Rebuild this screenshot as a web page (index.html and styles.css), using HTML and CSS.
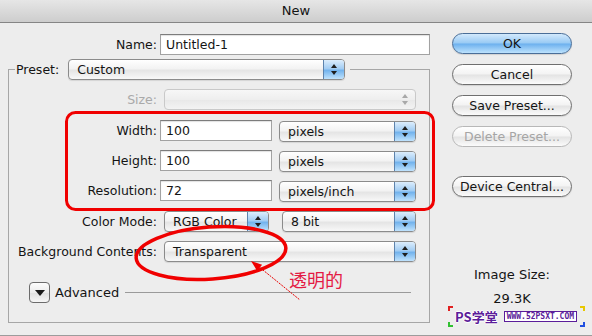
FILE: index.html
```html
<!DOCTYPE html>
<html lang="en">
<head>
  <meta charset="UTF-8" />
  <meta name="viewport" content="width=device-width, initial-scale=1.0" />
  <link rel="stylesheet" href="styles.css">
</head>
<body>
  <div class="window">
    <div class="titlebar">New</div>

    <div class="content">
      <div class="form">
        <div class="row name-row">
          <div class="lbl">Name:</div>
          <div class="field name-field">Untitled-1</div>
        </div>

        <fieldset class="preset">
          <legend>
            <span class="legend-lbl">Preset:</span>
            <div class="popup preset-popup"><span>Custom</span><i class="arrows"></i></div>
          </legend>

          <div class="row size-row">
            <div class="lbl dim">Size:</div>
            <div class="popup disabled full"><span></span><i class="arrows"></i></div>
          </div>

          <div class="row r-width">
            <div class="lbl">Width:</div>
            <div class="field num-field">100</div>
            <div class="popup unit"><span>pixels</span><i class="arrows"></i></div>
          </div>

          <div class="row r-height">
            <div class="lbl">Height:</div>
            <div class="field num-field">100</div>
            <div class="popup unit"><span>pixels</span><i class="arrows"></i></div>
          </div>

          <div class="row r-res">
            <div class="lbl">Resolution:</div>
            <div class="field num-field">72</div>
            <div class="popup unit"><span>pixels/inch</span><i class="arrows"></i></div>
          </div>

          <div class="row r-mode">
            <div class="lbl">Color Mode:</div>
            <div class="popup mode"><span>RGB Color</span><i class="arrows"></i></div>
            <div class="popup bits"><span>8 bit</span><i class="arrows"></i></div>
          </div>

          <div class="row r-bg">
            <div class="lbl">Background Contents:</div>
            <div class="popup full"><span>Transparent</span><i class="arrows"></i></div>
          </div>

          <div class="row advanced">
            <div class="disclosure"></div>
            <span class="adv-text">Advanced</span>
            <div class="adv-line"></div>
          </div>
        </fieldset>
      </div>

      <div class="side">
        <div class="btn default">OK</div>
        <div class="btn">Cancel</div>
        <div class="btn">Save Preset...</div>
        <div class="btn disabled">Delete Preset...</div>
        <div class="btn device">Device Central...</div>

        <div class="img-size">
          <div>Image Size:</div>
          <div class="img-val">29.3K</div>
        </div>

        <div class="watermark">
          <i class="corner tl"></i><i class="corner tr"></i>
          <i class="corner bl"></i><i class="corner br"></i>
          <span class="wm-name">PS学堂</span>
          <span class="wm-url">WWW.52PSXT.COM</span>
        </div>
      </div>
    </div>

    <!-- annotations drawn over the dialog -->
    <svg class="marks" width="592" height="336" viewBox="0 0 592 336">
      <rect x="66.5" y="112.5" width="367" height="97" rx="9" fill="none" stroke="#f00000" stroke-width="3" />
      <ellipse cx="211" cy="253" rx="75" ry="26" transform="rotate(-4 211 253)" fill="none" stroke="#f00000" stroke-width="3.5" />
      <line x1="258" y1="266" x2="300" y2="300" stroke="#e80000" stroke-width="1" stroke-dasharray="2 1" />
      <polygon points="251,261 262.1,264.7 257.1,270.9" fill="#f00000" />
    </svg>
    <span class="note">透明的</span>
  </div>
</body>
</html>
```

FILE: styles.css
```css
html, body {
  margin: 0;
  padding: 0;
  background-color: #ededed;
}

.window {
  position: relative;
  width: 592px;
  height: 336px;
  box-sizing: border-box;
  border-bottom: 1px solid #9c9c9c;
  font-family: "DejaVu Sans", sans-serif;
  font-size: 12.5px;
  color: #141414;
  background-color: #ededed;
  overflow: hidden;
}

.titlebar {
  height: 22px;
  line-height: 22px;
  text-align: center;
  font-size: 13px;
  background: linear-gradient(#e6e6e6, #cdcdcd);
  border-bottom: 1px solid #858585;
}

.content {
  display: flex;
  padding: 11px 0 0 8px;
}

.form {
  width: 422px;
}

.row {
  display: flex;
  align-items: flex-start;
  height: 21px;
}

.lbl {
  width: 148px;
  line-height: 21px;
  text-align: right;
  margin-right: 3px;
  white-space: nowrap;
}

.name-row .lbl {
  width: 149px;
}

.lbl.dim {
  color: #a9a9a9;
}

.field {
  height: 21px;
  box-sizing: border-box;
  border: 1px solid #a2a2a2;
  border-top-color: #7c7c7c;
  background-color: #ffffff;
  padding-left: 5px;
  line-height: 19px;
  box-shadow: inset 0 1px 1px rgba(0, 0, 0, 0.12);
}

.name-field {
  width: 270px;
}

.num-field {
  width: 112px;
}

/* popup menus */
.popup {
  display: flex;
  align-items: stretch;
  height: 21px;
  box-sizing: border-box;
  border: 1px solid #8b8b8b;
  border-radius: 4px;
  background: linear-gradient(#ffffff, #f3f3f3 45%, #e5e5e5 55%, #f8f8f8);
  overflow: hidden;
  margin-left: 4px;
  box-shadow: 0 1px 1px rgba(0, 0, 0, 0.1);
}

.popup span {
  flex: 1;
  padding-left: 8px;
  line-height: 19px;
  white-space: nowrap;
}

.arrows {
  position: relative;
  display: block;
  width: 20px;
  border-left: 1px solid #5d83ad;
  background: linear-gradient(#dcedfc, #a3cdf3 45%, #73b3ed 55%, #bfe2fd);
}

.arrows::before,
.arrows::after {
  content: "";
  position: absolute;
  left: 50%;
  margin-left: -3px;
  border-left: 3px solid transparent;
  border-right: 3px solid transparent;
}

.arrows::before {
  top: 4px;
  border-bottom: 4px solid #1e1e1e;
}

.arrows::after {
  top: 11px;
  border-top: 4px solid #1e1e1e;
}

.popup.disabled {
  border-color: #c9c9c9;
  background: linear-gradient(#f7f7f7, #eeeeee 50%, #e8e8e8 52%, #f3f3f3);
  box-shadow: none;
}

.popup.disabled .arrows {
  background: none;
  border-left: none;
}

.popup.disabled .arrows::before {
  border-bottom-color: #a8a8a8;
}

.popup.disabled .arrows::after {
  border-top-color: #a8a8a8;
}

.full {
  width: 252px;
}

.unit {
  width: 137px;
  margin-left: 7px;
  margin-top: 1px;
}

.mode {
  width: 105px;
}

.bits {
  width: 134px;
  margin-left: 13px;
}

/* preset group box */
.preset {
  margin: 4px 0 0 0;
  padding: 9px 0 19px 0;
  width: 422px;
  box-sizing: border-box;
  border: 1px solid #a6a6a6;
}

.preset legend {
  display: flex;
  align-items: center;
  margin-left: 6px;
  padding: 0 5px 0 1px;
}

.legend-lbl {
  margin-right: 9px;
}

.preset-popup {
  width: 277px;
  margin-left: 0;
}

.r-width { margin-top: 10px; }
.r-height { margin-top: 9px; }
.r-res { margin-top: 9px; }
.r-mode { margin-top: 10px; }
.r-bg { margin-top: 9px; }

.advanced {
  margin-top: 19px;
  align-items: center;
  height: 22px;
}

.disclosure {
  position: relative;
  width: 21px;
  height: 21px;
  margin-left: 20px;
  box-sizing: border-box;
  border: 1px solid #6c6c6c;
  border-radius: 4px;
  background: linear-gradient(#fdfdfd, #ececec 50%, #e0e0e0 52%, #f6f6f6);
}

.disclosure::after {
  content: "";
  position: absolute;
  left: 5px;
  top: 7px;
  border-left: 5px solid transparent;
  border-right: 5px solid transparent;
  border-top: 6px solid #1a1a1a;
}

.adv-text {
  margin-left: 5px;
  font-size: 13px;
}

.adv-line {
  flex: 1;
  height: 1px;
  margin: 0 18px 0 6px;
  background-color: #9a9a9a;
}

/* right column */
.side {
  display: flex;
  flex-direction: column;
  width: 120px;
  margin-left: 22px;
}

.btn {
  height: 21px;
  box-sizing: border-box;
  border: 1px solid #6f6f6f;
  border-radius: 11px;
  background: linear-gradient(#ffffff, #f3f3f3 48%, #e3e3e3 52%, #fbfbfb);
  text-align: center;
  line-height: 19px;
  margin-top: 10px;
  box-shadow: 0 1px 1px rgba(0, 0, 0, 0.12);
  white-space: nowrap;
}

.btn.default {
  margin-top: -1px;
  border-color: #4a6e98;
  background: linear-gradient(#d3e9fc, #98caf4 48%, #6cb0ee 52%, #bde2fd);
}

.btn.disabled {
  border-color: #b8b8b8;
  color: #a5a5a5;
  box-shadow: none;
}

.btn.device {
  margin-top: 29px;
}

.img-size {
  margin-top: 66px;
  text-align: center;
  font-size: 13px;
  line-height: 24px;
}

.watermark {
  position: relative;
  display: flex;
  align-items: center;
  gap: 6px;
  width: 137px;
  height: 21px;
  margin: -5px 0 0 -4px;
  padding-left: 7px;
  box-sizing: border-box;
}

.corner {
  position: absolute;
  width: 3px;
  height: 3px;
}

.corner.tl {
  left: 0;
  top: 0;
  border-left: 2px solid #e02020;
  border-top: 2px solid #e02020;
}

.corner.tr {
  right: 0;
  top: 0;
  border-right: 2px solid #e8c800;
  border-top: 2px solid #e8c800;
}

.corner.bl {
  left: 0;
  bottom: 0;
  border-left: 2px solid #30c030;
  border-bottom: 2px solid #30c030;
}

.corner.br {
  right: 0;
  bottom: 0;
  border-right: 2px solid #2050e0;
  border-bottom: 2px solid #2050e0;
}

.wm-name {
  font-family: "Noto Sans CJK SC", sans-serif;
  font-size: 13px;
  line-height: 15px;
  font-weight: bold;
  color: #5b1d9a;
  text-shadow: 1px 0 #fff, -1px 0 #fff, 0 1px #fff, 0 -1px #fff;
}

.wm-url {
  font-family: "DejaVu Sans Mono", monospace;
  font-size: 8px;
  font-weight: bold;
  color: #5b1d9a;
  background-color: #ffffff;
  border: 1px solid #5b1d9a;
  padding: 0 2px;
  line-height: 9px;
}

/* annotations */
.marks {
  position: absolute;
  left: 0;
  top: 0;
  pointer-events: none;
}

.note {
  position: absolute;
  left: 289px;
  top: 266px;
  font-family: "Noto Sans CJK SC", sans-serif;
  font-size: 18px;
  color: #e41a44;
}
```
